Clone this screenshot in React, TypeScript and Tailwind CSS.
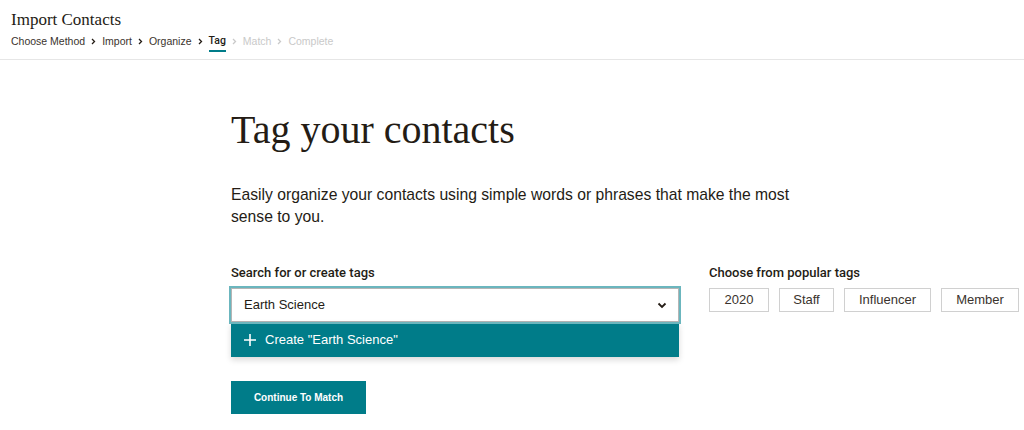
import React from "react";

const sans = "font-['Liberation_Sans',Arial,sans-serif]";
const serif = "font-['Liberation_Serif','Times_New_Roman',serif]";
const medium = "font-['Roboto','Liberation_Sans',sans-serif] font-medium";

function Chevron({ light }: { light?: boolean }) {
  return (
    <svg width="5" height="7" viewBox="0 0 5 7" className="mx-[6px]">
      <path d="M1 1 L3.5 3.5 L1 6" fill="none" stroke={light ? "#c9c9c9" : "#241c15"} strokeWidth="1.3" />
    </svg>
  );
}

export default function App() {
  const crumbs = [
    { t: "Choose Method", s: "done" },
    { t: "Import", s: "done" },
    { t: "Organize", s: "done" },
    { t: "Tag", s: "active" },
    { t: "Match", s: "todo" },
    { t: "Complete", s: "todo" },
  ];
  return (
    <div className={`w-[1024px] h-[430px] bg-white text-[#241c15] overflow-hidden ${sans}`}>
      <header className="h-[60px] border-b border-[#e6e6e6] pl-[11px] pt-[10px]">
        <h1 className={`${serif} text-[17px] leading-[20px]`}>Import Contacts</h1>
        <nav className="flex items-center mt-[4px] text-[10.5px] leading-[14px] text-[#3a332d]">
          {crumbs.map((c, i) => (
            <div key={c.t} className="flex items-center">
              {i > 0 && <Chevron light={c.s === "todo"} />}
              <span
                className={
                  c.s === "todo"
                    ? "text-[#c9c9c9]"
                    : c.s === "active"
                    ? `${medium} relative text-[#241c15]`
                    : ""
                }
              >
                {c.t}
                {c.s === "active" && (
                  <span className="absolute left-0 right-0 top-[16px] h-[2px] bg-[#007c89]" />
                )}
              </span>
            </div>
          ))}
        </nav>
      </header>
      <main className="pl-[231px] pt-[46px]">
        <h2 className={`${serif} text-[40px] leading-[48px] text-[#241c15]`}>Tag your contacts</h2>
        <p className="mt-[30px] w-[580px] text-[15.7px] leading-[22px] text-[#241c15]">
          Easily organize your contacts using simple words or phrases that make the most sense to you.
        </p>
        <div className="flex mt-[37px]">
          <div className="w-[448px]">
            <div className={`${medium} text-[13px] leading-[16px] mb-[7px] text-[#241c15]`}>Search for or create tags</div>
            <div className="relative">
              <div className="h-[34px] border border-[#b5b5b5] outline outline-2 outline-[#6bb6be] flex items-center justify-between pl-[12px] pr-[10px] text-[13px]">
                <span>Earth Science</span>
                <svg width="12" height="12" viewBox="0 0 12 12">
                  <path d="M2.5 4.5 L6 8 L9.5 4.5" fill="none" stroke="#241c15" strokeWidth="1.8" />
                </svg>
              </div>
              <div className="h-[35px] bg-[#007c89] flex items-center pl-[12px] text-white text-[13px] shadow-[0_3px_6px_rgba(0,0,0,0.15)]">
                <svg width="14" height="14" viewBox="0 0 14 14" className="mr-[8px]">
                  <path d="M7 1 V13 M1 7 H13" stroke="white" strokeWidth="1.6" />
                </svg>
                Create "Earth Science"
              </div>
            </div>
            <button className="mt-[24px] w-[135px] h-[33px] bg-[#007c89] text-white text-[10px] font-bold">
              Continue To Match
            </button>
          </div>
          <div className="ml-[30px]">
            <div className={`${medium} text-[13px] leading-[16px] mb-[7px] text-[#241c15]`}>Choose from popular tags</div>
            <div className="flex gap-[10px]">
              {[
                ["2020", "w-[60px]"],
                ["Staff", "w-[55px]"],
                ["Influencer", "w-[87px]"],
                ["Member", "w-[78px]"],
              ].map(([t, w]) => (
                <div key={t} className={`${w} h-[24px] border border-[#d0d0d0] flex items-center justify-center text-[13px] text-[#3a332d]`}>
                  {t}
                </div>
              ))}
            </div>
          </div>
        </div>
      </main>
    </div>
  );
}
